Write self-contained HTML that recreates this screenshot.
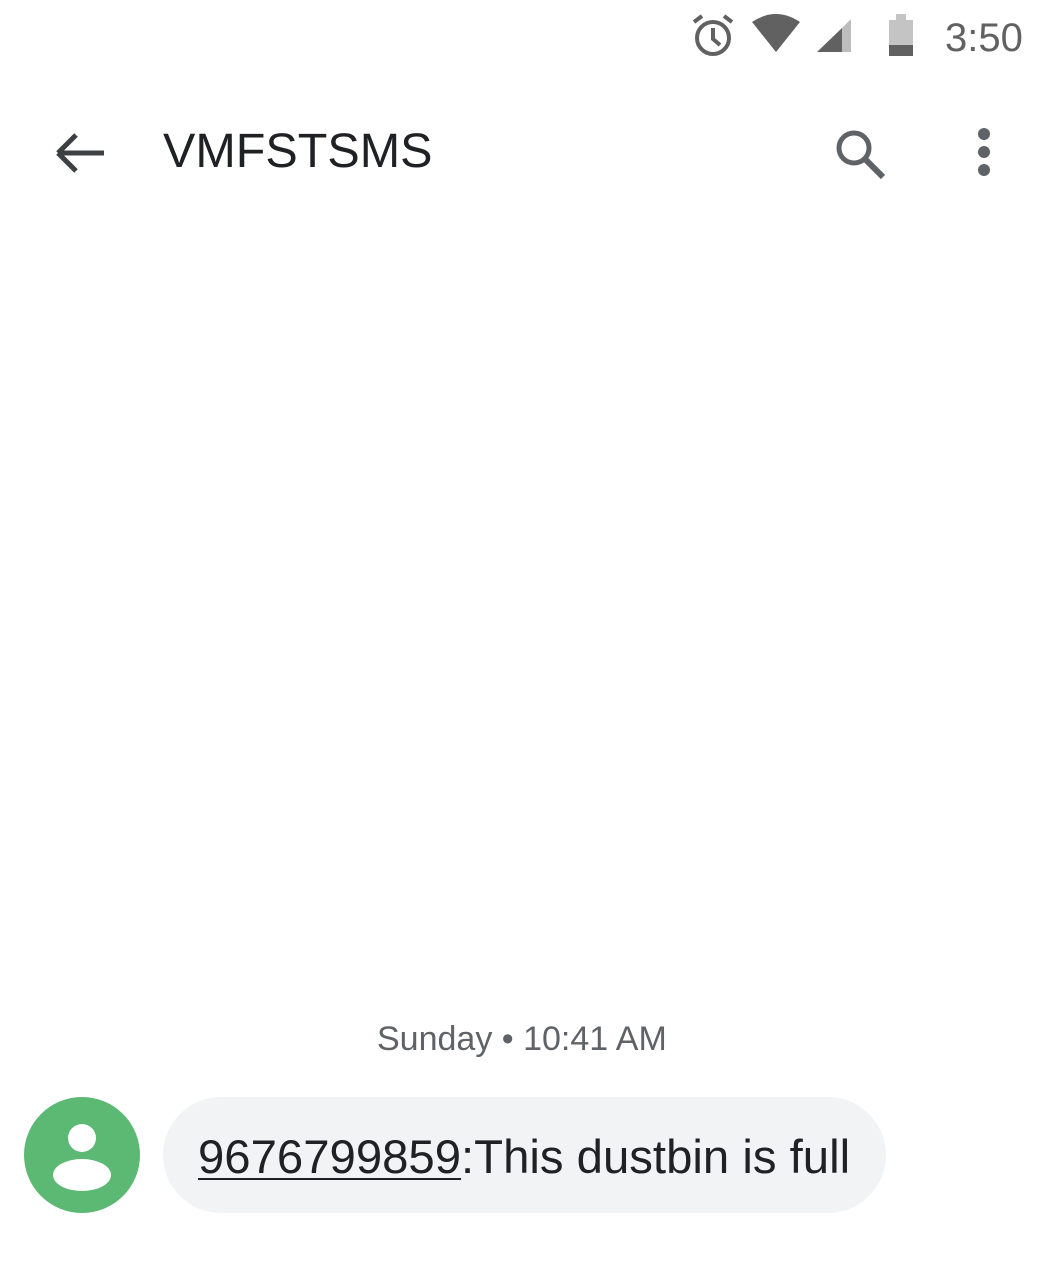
<!DOCTYPE html>
<html><head><meta charset="utf-8"><style>
html,body{margin:0;padding:0;background:#fff;}
body{width:1048px;height:1280px;position:relative;overflow:hidden;font-family:"Liberation Sans",sans-serif;}
.abs{position:absolute;}
</style></head><body>
<!-- status bar -->
<svg class="abs" style="left:680px;top:0" width="368" height="80" viewBox="0 0 368 80">
 <g fill="none" stroke="#616161" stroke-width="4">
  <circle cx="33" cy="38" r="16"/>
  <path d="M33 28 V39 L40 45"/>
  <path d="M14 22 L22 16 M52 22 L44 16"/>
 </g>
 <path d="M72 22 Q96 6 120 22 L96 52 Z" fill="#616161"/>
 <path d="M137 52 L162 28 V52 Z" fill="#616161"/>
 <path d="M162 28 L171 19 V52 H162 Z" fill="#bdbdbd"/>
 <rect x="209" y="20" width="24" height="25" fill="#c4c4c4"/>
 <rect x="216" y="14" width="10" height="7" fill="#c4c4c4"/>
 <rect x="209" y="45" width="24" height="11" fill="#616161"/>
 <text x="265" y="51" font-family="Liberation Sans" font-size="40" fill="#616161">3:50</text>
</svg>
<!-- toolbar -->
<svg class="abs" style="left:50px;top:125px" width="60" height="56"><path d="M8 28 H54 M8 28 L26 10 M8 28 L26 46" stroke="#3c4043" stroke-width="5" fill="none"/></svg>
<div class="abs" style="left:163px;top:123px;font-size:48.5px;color:#202124;">VMFSTSMS</div>
<svg class="abs" style="left:830px;top:122px" width="60" height="60"><circle cx="24" cy="26" r="15" stroke="#5f6368" stroke-width="5" fill="none"/><path d="M35 37 L53 55" stroke="#5f6368" stroke-width="6"/></svg>
<svg class="abs" style="left:970px;top:125px" width="30" height="54"><circle cx="14" cy="9" r="6" fill="#5f6368"/><circle cx="14" cy="27" r="6" fill="#5f6368"/><circle cx="14" cy="45" r="6" fill="#5f6368"/></svg>
<!-- timestamp -->
<div class="abs" style="left:377px;top:1020px;font-size:34px;color:#5f6368;white-space:nowrap;">Sunday • 10:41 AM</div>
<!-- avatar -->
<svg class="abs" style="left:24px;top:1097px" width="116" height="116"><circle cx="58" cy="58" r="58" fill="#5bb974"/><circle cx="58" cy="41" r="14" fill="#fff"/><ellipse cx="58" cy="78" rx="29" ry="16" fill="#fff"/></svg>
<!-- bubble -->
<div class="abs" style="left:163px;top:1097px;width:723px;height:116px;border-radius:58px;background:#f1f3f4;"></div>
<div class="abs" style="left:198px;top:1130px;font-size:47.3px;color:#202124;white-space:nowrap;"><span style="text-decoration:underline;text-decoration-thickness:2px;text-underline-offset:5px;">9676799859</span>:This dustbin is full</div>
</body></html>
